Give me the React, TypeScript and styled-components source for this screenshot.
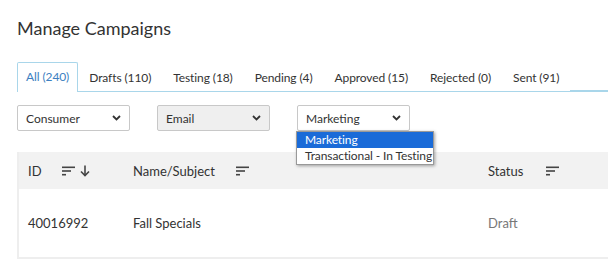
import React from "react";
import styled, { createGlobalStyle } from "styled-components";

const Global = createGlobalStyle`
  html, body { margin: 0; padding: 0; background: #fff; }
  body { font-family: "Lato", "Open Sans", sans-serif; color: #333; }
  * { box-sizing: border-box; }
`;

const Page = styled.div`
  padding: 17px 0 0 17px;
  width: 608px;
  height: 270px;
  overflow: hidden;
`;

const Title = styled.h1`
  margin: 0;
  font-size: 18px;
  font-weight: 400;
  line-height: 22px;
  color: #333;
`;

const Tabs = styled.div`
  display: flex;
  margin-top: 23px;
  border-bottom: 2px solid #a9d6ea;
  height: 30px;
  width: 620px;
`;

const Tab = styled.div<{ $active?: boolean }>`
  padding: 0 ${(p) => (p.$active ? "8px" : "10px")};
  font-size: 12px;
  letter-spacing: -0.1px;
  line-height: 28px;
  color: ${(p) => (p.$active ? "#3d7fc1" : "#333")};
  background: #fff;
  border: 1px solid ${(p) => (p.$active ? "#a9d6ea" : "transparent")};
  border-bottom: none;
  margin-bottom: ${(p) => (p.$active ? "-2px" : "0")};
  height: ${(p) => (p.$active ? "30px" : "28px")};
  margin-top: ${(p) => (p.$active ? "0" : "1px")};
  border-radius: 2px 2px 0 0;
`;

const Filters = styled.div`
  display: flex;
  gap: 27px;
  margin-top: 13px;
  position: relative;
`;

const SelectWrap = styled.div`
  position: relative;
`;

const Select = styled.div<{ $grey?: boolean }>`
  width: 113px;
  height: 26px;
  border: 1px solid #c8c8c8;
  border-radius: 2px;
  background: ${(p) => (p.$grey ? "#efefef" : "#fff")};
  display: flex;
  align-items: center;
  justify-content: space-between;
  padding: 0 8px 0 8px;
  font-size: 12px;
  color: #333;
`;

const Chevron = () => (
  <svg width="9" height="6" viewBox="0 0 9 6">
    <path d="M1 1 L4.5 4.5 L8 1" stroke="#333" strokeWidth="1.8" fill="none" />
  </svg>
);

const Menu = styled.div`
  position: absolute;
  left: -1px;
  top: 26px;
  width: 138px;
  background: #fff;
  border: 1px solid #999;
  box-shadow: 1px 1px 3px rgba(0, 0, 0, 0.35);
  z-index: 5;
  font-size: 12px;
  letter-spacing: -0.1px;
`;

const Option = styled.div<{ $sel?: boolean }>`
  height: 16px;
  line-height: 16px;
  padding: 0 8px;
  white-space: nowrap;
  background: ${(p) => (p.$sel ? "#1a6bd8" : "#fff")};
  color: ${(p) => (p.$sel ? "#fff" : "#333")};
`;

const Table = styled.div`
  margin-top: 21px;
  border-left: 2px solid #eee;
  width: 620px;
`;

const Row = styled.div<{ $head?: boolean }>`
  display: grid;
  grid-template-columns: 105px 355px 1fr;
  align-items: center;
  height: ${(p) => (p.$head ? "37px" : "70px")};
  background: ${(p) => (p.$head ? "#f2f2f2" : "#fff")};
  border-bottom: ${(p) => (p.$head ? "none" : "2px solid #eee")};
  padding-left: 9px;
  font-size: 13px;
`;

const HeadCell = styled.div<{ $gap: number }>`
  display: flex;
  align-items: center;
  gap: ${(p) => p.$gap}px;
  color: #333;
`;

const Cell = styled.div<{ $muted?: boolean }>`
  color: ${(p) => (p.$muted ? "#777" : "#333")};
`;

const SortIcon = ({ arrow }: { arrow?: boolean }) => (
  <svg width={arrow ? 32 : 16} height="12" viewBox={arrow ? "0 0 32 12" : "0 0 16 12"}>
    <rect x="1" y="1.5" width="13" height="1.6" fill="#444" />
    <rect x="1" y="5.2" width="9" height="1.6" fill="#444" />
    <rect x="1" y="8.9" width="4" height="1.6" fill="#444" />
    {arrow && (
      <g stroke="#444" strokeWidth="1.6" fill="none">
        <path d="M24 0.5 V10.5" />
        <path d="M20 6.5 L24 10.5 L28 6.5" />
      </g>
    )}
  </svg>
);

const tabs = [
  "All (240)",
  "Drafts (110)",
  "Testing (18)",
  "Pending (4)",
  "Approved (15)",
  "Rejected (0)",
  "Sent (91)",
];

export default function App() {
  return (
    <>
      <Global />
      <Page>
        <Title>Manage Campaigns</Title>
        <Tabs>
          {tabs.map((t, i) => (
            <Tab key={t} $active={i === 0}>
              {t}
            </Tab>
          ))}
        </Tabs>
        <Filters>
          <Select>
            Consumer <Chevron />
          </Select>
          <Select $grey>
            Email <Chevron />
          </Select>
          <SelectWrap>
            <Select>
              Marketing <Chevron />
            </Select>
            <Menu>
              <Option $sel>Marketing</Option>
              <Option>Transactional - In Testing</Option>
            </Menu>
          </SelectWrap>
        </Filters>
        <Table>
          <Row $head>
            <HeadCell $gap={19}>
              ID <SortIcon arrow />
            </HeadCell>
            <HeadCell $gap={20}>
              Name/Subject <SortIcon />
            </HeadCell>
            <HeadCell $gap={22}>
              Status <SortIcon />
            </HeadCell>
          </Row>
          <Row>
            <Cell>40016992</Cell>
            <Cell>Fall Specials</Cell>
            <Cell $muted>Draft</Cell>
          </Row>
        </Table>
      </Page>
    </>
  );
}
